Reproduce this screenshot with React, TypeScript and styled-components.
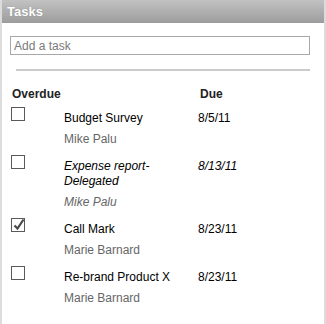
import React from "react";
import styled, { createGlobalStyle } from "styled-components";

const Global = createGlobalStyle`
  html, body { margin: 0; padding: 0; background: #ffffff; }
  body { font-family: "Liberation Sans", Arial, sans-serif; }
`;

const Panel = styled.div`
  width: 326px;
  height: 324px;
  box-sizing: border-box;
  border-left: 2px solid #dcdcdc;
  border-right: 2px solid #dcdcdc;
  background: #ffffff;
  overflow: hidden;
`;

const Header = styled.div`
  height: 23px;
  line-height: 23px;
  padding-left: 5px;
  background: linear-gradient(#c2c2c2, #9c9c9c);
  color: #ffffff;
  font-size: 13px;
  font-weight: bold;
  text-shadow: 0 0 1px rgba(90, 90, 90, 0.5);
`;

const Body = styled.div`
  padding: 13px 14px 0 8px;
`;

const AddInput = styled.input`
  display: block;
  box-sizing: border-box;
  width: 100%;
  height: 19px;
  margin: 0;
  padding: 0 3px;
  border: 1px solid #a8a8a8;
  font-family: "Liberation Sans", Arial, sans-serif;
  font-size: 12px;
  color: #333;
  outline: none;
  &::placeholder { color: #7a7a7a; }
`;

const Divider = styled.div`
  margin: 14px 0 0 6px;
  height: 2px;
  background: #cbcbcb;
`;

const ColumnHeads = styled.div`
  display: grid;
  grid-template-columns: 188px 1fr;
  margin-top: 16px;
  padding-left: 2px;
  font-size: 12px;
  line-height: 15px;
  font-weight: bold;
  color: #222;
`;

const List = styled.div`
  margin-top: 5px;
`;

const Row = styled.div<{ $italic?: boolean }>`
  display: grid;
  grid-template-columns: 54px 134px 1fr;
  margin-bottom: 8px;
  font-size: 12px;
  line-height: 15px;
  font-style: ${(p) => (p.$italic ? "italic" : "normal")};
`;

const Box = styled.span`
  display: block;
  box-sizing: border-box;
  width: 14px;
  height: 14px;
  margin-left: 1px;
  border: 1px solid #5a5a5a;
  background: #fff;
  position: relative;
  svg { position: absolute; left: 1px; top: -1px; }
`;

const Info = styled.div`
  padding-top: 4px;
`;

const Title = styled.div`
  color: #000;
`;

const Owner = styled.div`
  margin-top: 6px;
  color: #666666;
`;

const DueDate = styled.div`
  padding-top: 4px;
  color: #000;
`;

type Task = { title: string; owner: string; due: string; done?: boolean; italic?: boolean };

const tasks: Task[] = [
  { title: "Budget Survey", owner: "Mike Palu", due: "8/5/11" },
  { title: "Expense report-Delegated", owner: "Mike Palu", due: "8/13/11", italic: true },
  { title: "Call Mark", owner: "Marie Barnard", due: "8/23/11", done: true },
  { title: "Re-brand Product X", owner: "Marie Barnard", due: "8/23/11" },
];

function CheckBox({ checked }: { checked?: boolean }) {
  return (
    <Box>
      {checked && (
        <svg width="12" height="13" viewBox="0 0 12 13">
          <path d="M1.5 7.5 L4.5 10.5 L10.5 1.5" fill="none" stroke="#4a4a4a" strokeWidth="2.2" />
        </svg>
      )}
    </Box>
  );
}

export default function App() {
  return (
    <>
      <Global />
      <Panel>
        <Header>Tasks</Header>
        <Body>
          <AddInput placeholder="Add a task" />
          <Divider />
          <ColumnHeads>
            <span>Overdue</span>
            <span>Due</span>
          </ColumnHeads>
          <List>
            {tasks.map((t) => (
              <Row key={t.title} $italic={t.italic}>
                <CheckBox checked={t.done} />
                <Info>
                  <Title>{t.title}</Title>
                  <Owner>{t.owner}</Owner>
                </Info>
                <DueDate>{t.due}</DueDate>
              </Row>
            ))}
          </List>
        </Body>
      </Panel>
    </>
  );
}
